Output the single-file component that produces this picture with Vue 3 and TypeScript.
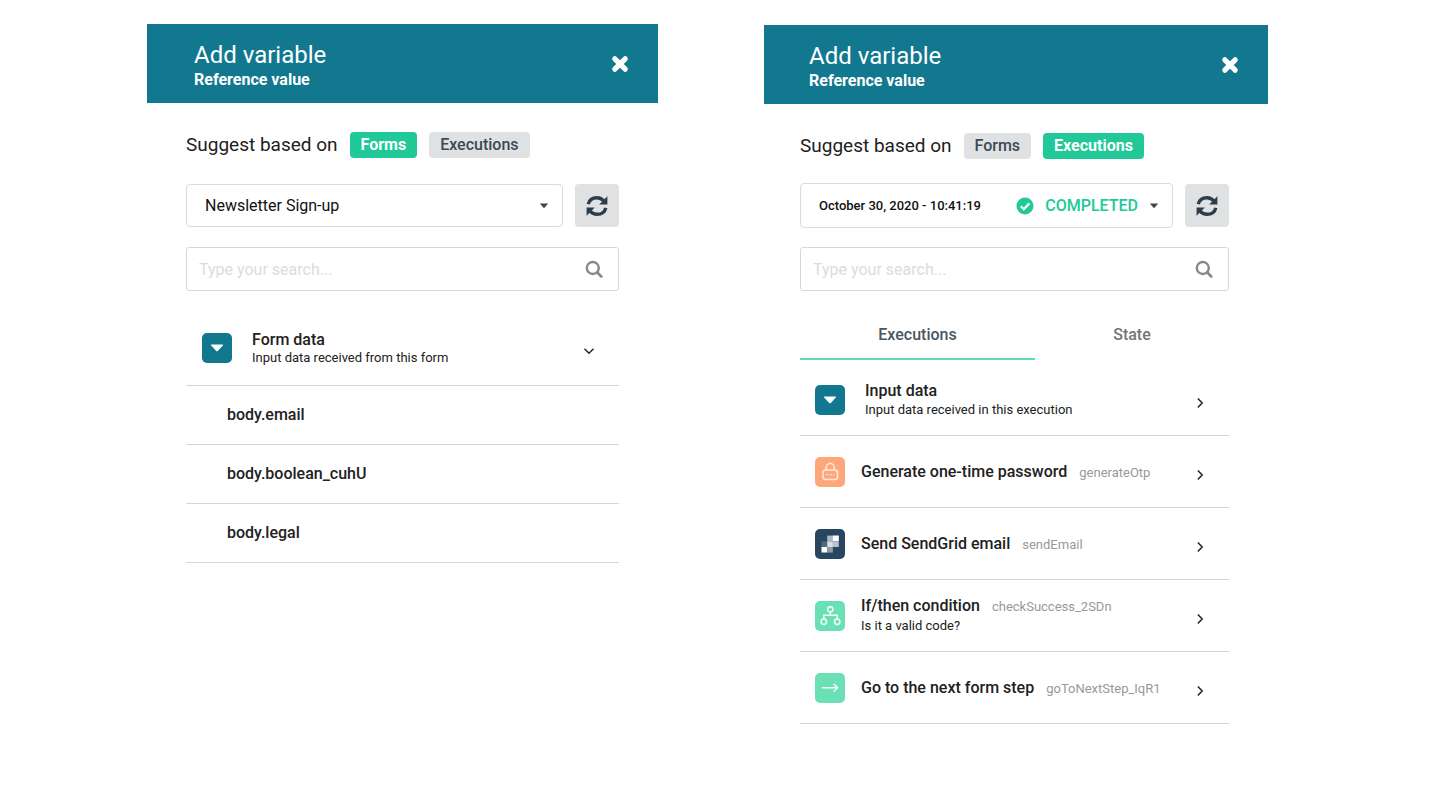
<script setup lang="ts">
import { ref } from 'vue'

type IconName = 'data' | 'lock' | 'sendgrid' | 'branch' | 'arrow'

interface Step {
  icon: IconName
  title: string
  id?: string
  note?: string
}

const formFields: string[] = ['body.email', 'body.boolean_cuhU', 'body.legal']

const steps: Step[] = [
  { icon: 'data', title: 'Input data', note: 'Input data received in this execution' },
  { icon: 'lock', title: 'Generate one-time password', id: 'generateOtp' },
  { icon: 'sendgrid', title: 'Send SendGrid email', id: 'sendEmail' },
  { icon: 'branch', title: 'If/then condition', id: 'checkSuccess_2SDn', note: 'Is it a valid code?' },
  { icon: 'arrow', title: 'Go to the next form step', id: 'goToNextStep_IqR1' },
]

const panels = ['forms', 'executions'] as const
const queries = ref<Record<string, string>>({ forms: '', executions: '' })
const open = ref(true)
const tab = ref<'executions' | 'state'>('executions')
</script>

<template>
  <main class="page">
    <section v-for="panel in panels" :key="panel" class="panel" :class="panel" aria-label="Add variable">
      <header class="head">
        <div>
          <h1>Add variable</h1>
          <p>Reference value</p>
        </div>
        <button type="button" class="close" aria-label="Close">
          <svg viewBox="0 0 18 18" width="18" height="18">
            <path d="M3.8 3.8 14.2 14.2M14.2 3.8 3.8 14.2" stroke="currentColor" stroke-width="5.2" stroke-linecap="round" />
          </svg>
        </button>
      </header>

      <div class="body">
        <div class="suggest">
          <span class="lead">Suggest based on</span>
          <button type="button" class="pill" :class="{ on: panel === 'forms' }">Forms</button>
          <button type="button" class="pill" :class="{ on: panel === 'executions' }">Executions</button>
        </div>

        <div class="source">
          <div class="pick">
            <select v-if="panel === 'forms'" aria-label="Form">
              <option>Newsletter Sign-up</option>
            </select>
            <select v-else aria-label="Execution">
              <option>October 30, 2020 - 10:41:19</option>
            </select>
            <span class="status">
              <template v-if="panel === 'executions'">
                <svg viewBox="0 0 18 18" width="18" height="18">
                  <circle cx="9" cy="9" r="8.5" fill="#20c997" />
                  <path d="m4.8 9.2 3 3 5.6-5.8" fill="none" stroke="#fff" stroke-width="2.3" />
                </svg>
                <span class="done">COMPLETED</span>
              </template>
              <svg class="caret" viewBox="0 0 10 6" width="10" height="6"><path d="M.8.5h8.4L5 5.2z" fill="#444" /></svg>
            </span>
          </div>
          <button type="button" class="refresh" aria-label="Refresh">
            <svg viewBox="0 0 22 22" width="22" height="22">
              <g fill="none" stroke="#2f3d49" stroke-width="3.4">
                <path d="M2.2 9.2C3.2 5.2 6.6 2.7 11 2.7c2.900 0 5.100 1.200 6.800 3.200" />
                <path d="M19.8 12.8c-1 4-4.400 6.500-8.800 6.500-2.900 0-5.100-1.200-6.800-3.200" />
              </g>
              <path d="M21.4 1.300v8.200h-8.200zM.6 20.700v-8.200h8.200z" fill="#2f3d49" />
            </svg>
          </button>
        </div>

        <label class="search">
          <input v-model="queries[panel]" type="text" placeholder="Type your search..." aria-label="Search variables" />
          <svg viewBox="0 0 18 18" width="18" height="18">
            <circle cx="7.8" cy="8" r="6" fill="none" stroke="#888" stroke-width="2.4" />
            <path d="m12.300 12.500 4 4" stroke="#888" stroke-width="2.600" stroke-linecap="round" />
          </svg>
        </label>

        <template v-if="panel === 'forms'">
          <button type="button" class="row group" :aria-expanded="open" @click="open = !open">
            <span class="tile data">
              <svg viewBox="0 0 30 30"><path d="M9.500 11.500h11q1 0 .3.900l-5 5.500q-.8.800-1.600 0l-5-5.500q-.7-.9.300-.9z" fill="#fff" /></svg>
            </span>
            <span class="text">
              <strong>Form data</strong>
              <span class="note">Input data received from this form</span>
            </span>
            <svg class="chev" viewBox="0 0 12 12" width="12" height="12">
              <path d="m1.500 3.800 4.500 4.400 4.500-4.400" fill="none" stroke="#222" stroke-width="1.400" />
            </svg>
          </button>
          <ul v-if="open" class="fields">
            <li v-for="field in formFields" :key="field">
              <button type="button" class="row">{{ field }}</button>
            </li>
          </ul>
        </template>

        <template v-else>
          <div class="tabs" role="tablist">
            <button type="button" role="tab" :class="{ active: tab === 'executions' }" :aria-selected="tab === 'executions'" @click="tab = 'executions'">Executions</button>
            <button type="button" role="tab" :class="{ active: tab === 'state' }" :aria-selected="tab === 'state'" @click="tab = 'state'">State</button>
          </div>
          <ul class="steps">
            <li v-for="step in steps" :key="step.title">
              <button type="button" class="row" :class="{ input: step.icon === 'data' }">
                <span class="tile" :class="step.icon">
                  <svg viewBox="0 0 30 30" fill="none" stroke="#fff" stroke-width="1.500" stroke-linecap="round">
                    <path v-if="step.icon === 'data'" d="M9.500 11.500h11q1 0 .3.900l-5 5.500q-.8.800-1.600 0l-5-5.500q-.7-.9.300-.9z" fill="#fff" stroke="none" />
                    <g v-else-if="step.icon === 'lock'" stroke="#ffeadf">
                      <rect x="8" y="13" width="14.500" height="9.500" rx="2.500" />
                      <path d="M11.200 13v-2.500a4 4 0 0 1 8 0V13" />
                      <path d="M11.500 17.700h.1M14 17.700h.1M16.500 17.700h.1M19 17.700h.1" stroke-width="1.300" />
                    </g>
                    <g v-else-if="step.icon === 'sendgrid'" stroke="none">
                      <path d="M6.500 12.300h5.700v5.700h-5.700z" fill="#50687f" />
                      <path d="M12.200 6.600h5.800v5.700h-5.800z" fill="#aeb9c5" />
                      <path d="M17.900 6.600h5.900v5.700h-5.900zM6.500 18h5.700v5.600h-5.700z" fill="#fff" />
                      <path d="M12.200 12.300h5.700v5.700h-5.700z" fill="#d9dee4" />
                      <path d="M17.900 12.300h5.900v5.700h-5.900z" fill="#b9c2cd" />
                      <path d="M12.200 18h5.700v5.600h-5.700z" fill="#8c9bac" />
                    </g>
                    <g v-else-if="step.icon === 'branch'" stroke="#effff8">
                      <circle cx="15.300" cy="8.300" r="2.600" />
                      <circle cx="8.800" cy="20.700" r="2.700" />
                      <circle cx="22.200" cy="20.700" r="2.700" />
                      <path d="M15.300 11v3.200M8.800 18v-3.800h13.400V18" />
                    </g>
                    <path v-else d="M7.500 14.700h15M19.200 11.400l3.500 3.300-3.500 3.300" stroke="#effff8" />
                  </svg>
                </span>
                <span class="text">
                  <span class="line"><strong>{{ step.title }}</strong><span v-if="step.id" class="id">{{ step.id }}</span></span>
                  <span v-if="step.note" class="note">{{ step.note }}</span>
                </span>
                <svg class="chev" viewBox="0 0 12 12" width="12" height="12">
                  <path d="M3.800 1.500 8.200 6l-4.400 4.500" fill="none" stroke="#222" stroke-width="1.500" />
                </svg>
              </button>
            </li>
          </ul>
        </template>
      </div>
    </section>
  </main>
</template>

<style>
body {
  background: #fff;
}
</style>

<style scoped>
* {
  box-sizing: border-box;
}
.page {
  display: grid;
  grid-template-columns: 511fr 504fr;
  align-items: start;
  gap: 106px;
  padding: 24px 172px 24px 147px;
  font-family: Roboto, "Liberation Sans", sans-serif;
  color: #212121;
}
button,
select,
input {
  font: inherit;
  color: inherit;
  margin: 0;
  padding: 0;
  border: 0;
  background: none;
}
button {
  cursor: pointer;
}
svg {
  display: block;
  flex: none;
}
ul {
  list-style: none;
  margin: 0;
  padding: 0;
}
.head {
  display: flex;
  align-items: flex-start;
  justify-content: space-between;
  padding: 16px 28px 14px 47px;
  background: #11788f;
  color: #fff;
}
.executions .head {
  margin-top: 1px;
  padding-left: 45px;
}
.head h1 {
  margin: 0;
  font-size: 24px;
  line-height: 30px;
  font-weight: 400;
}
.head p {
  margin: 0;
  font-size: 16px;
  line-height: 19px;
  font-weight: 700;
}
.close {
  margin-top: 14px;
  padding: 1px;
}
.body {
  padding: 29px 39px 0;
}
.executions .body {
  padding-left: 36px;
}
.suggest {
  display: flex;
  align-items: center;
  gap: 12px;
}
.lead {
  font-size: 19px;
  line-height: 26px;
}
.pill {
  padding: 0 11px;
  border-radius: 4px;
  background: #dfe1e3;
  color: #3d4955;
  font-size: 16px;
  line-height: 26px;
  font-weight: 500;
}
.pill.on {
  background: #20c997;
  color: #fff;
  font-weight: 700;
}
.source {
  display: flex;
  gap: 12px;
  margin-top: 26px;
}
.executions .source {
  margin-top: 24px;
}
.pick {
  position: relative;
  flex: 1;
}
.pick select {
  appearance: none;
  width: 100%;
  height: 43px;
  padding: 0 18px;
  border: 1px solid #d9dcde;
  border-radius: 4px;
  background: #fff;
  font-size: 16px;
  color: #111;
}
.executions .pick select {
  height: 45px;
  font-size: 13px;
  font-weight: 500;
}
.status {
  position: absolute;
  inset: 0 14px 0 auto;
  display: flex;
  align-items: center;
  gap: 11px;
  pointer-events: none;
}
.done {
  color: #20c997;
  font-size: 16px;
  font-weight: 500;
}
.refresh {
  display: grid;
  place-items: center;
  align-self: center;
  width: 44px;
  height: 43px;
  border-radius: 4px;
  background: #dfe1e3;
}
.search {
  display: flex;
  align-items: center;
  height: 44px;
  margin-top: 20px;
  padding: 0 15px 0 12px;
  border: 1px solid #cddae0;
  border-radius: 3px;
}
.executions .search {
  margin-top: 19px;
}
.search input {
  flex: 1;
  min-width: 0;
  outline: 0;
  font-size: 16px;
}
.search input::placeholder {
  color: #dcdcdc;
  opacity: 1;
}
.row {
  display: flex;
  align-items: center;
  width: 100%;
  border-bottom: 1px solid #cbd9df;
  text-align: left;
}
.row strong {
  font-weight: 500;
}
.group {
  height: 75px;
  margin-top: 20px;
  padding: 0 24px 0 16px;
}
.tile {
  flex: none;
  width: 30px;
  height: 30px;
  border-radius: 5px;
}
.data { background: #11788f; }
.lock { background: #ffa77c; }
.sendgrid { background: #294661; }
.branch,
.arrow { background: #6be0b6; }
.text {
  flex: 1;
  display: flex;
  flex-direction: column;
  margin-left: 16px;
  font-size: 16px;
  line-height: 19px;
}
.group .text {
  margin-left: 20px;
  padding-top: 2px;
  line-height: 18px;
}
.input .text {
  margin-left: 20px;
}
.line {
  display: flex;
  align-items: baseline;
  gap: 12px;
}
.id {
  color: #999;
  font-size: 13px;
}
.note {
  font-size: 13px;
}
.chev {
  margin-top: 6px;
}
.fields .row {
  height: 59px;
  padding: 0 41px 2px;
  font-size: 16px;
  font-weight: 500;
}
.tabs {
  display: grid;
  grid-template-columns: 235fr 194fr;
  margin-top: 20px;
}
.tabs button {
  height: 49px;
  border-bottom: 2px solid transparent;
  color: #757575;
  font-size: 16px;
  font-weight: 500;
}
.tabs button.active {
  border-bottom-color: #5fdab4;
  color: #4a5560;
}
.steps .row {
  min-height: 72px;
  padding: 0 23px 0 15px;
}
.steps .row.input {
  min-height: 76px;
  padding-top: 4px;
}
</style>
